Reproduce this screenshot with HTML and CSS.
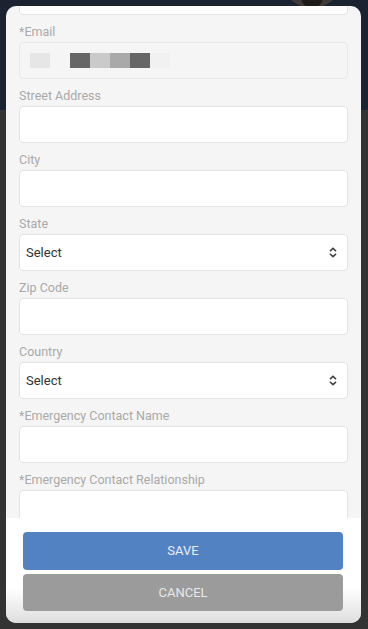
FILE: index.html
```html
<!DOCTYPE html>
<html lang="en">
<head>
    <meta charset="UTF-8">
    <meta name="viewport" content="width=device-width, initial-scale=1.0">
    <title>Edit Profile</title>
    <link rel="stylesheet" href="styles.css">
</head>
<body>
    <div class="page-header">
        <div class="avatar"><div class="avatar-head"></div></div>
    </div>

    <div class="modal">
        <div class="modal-body">
            <div class="field field-cut">
                <input class="input" type="text">
            </div>

            <div class="field">
                <label class="label">*Email</label>
                <div class="input input-disabled">
                    <div class="blur">
                        <span class="px px-1"></span>
                        <span class="px px-gap"></span>
                        <span class="px px-2"></span>
                        <span class="px px-3"></span>
                        <span class="px px-4"></span>
                        <span class="px px-2"></span>
                        <span class="px px-5"></span>
                    </div>
                </div>
            </div>

            <div class="field">
                <label class="label">Street Address</label>
                <input class="input" type="text">
            </div>

            <div class="field">
                <label class="label">City</label>
                <input class="input" type="text">
            </div>

            <div class="field">
                <label class="label">State</label>
                <div class="input select">
                    <span>Select</span>
                    <svg class="chevrons" width="8" height="11" viewBox="0 0 8 11">
                        <path d="M1 4.2 L4 1.4 L7 4.2 M1 6.8 L4 9.6 L7 6.8" fill="none" stroke="#444" stroke-width="1.6"/>
                    </svg>
                </div>
            </div>

            <div class="field">
                <label class="label">Zip Code</label>
                <input class="input" type="text">
            </div>

            <div class="field">
                <label class="label">Country</label>
                <div class="input select">
                    <span>Select</span>
                    <svg class="chevrons" width="8" height="11" viewBox="0 0 8 11">
                        <path d="M1 4.2 L4 1.4 L7 4.2 M1 6.8 L4 9.6 L7 6.8" fill="none" stroke="#444" stroke-width="1.6"/>
                    </svg>
                </div>
            </div>

            <div class="field">
                <label class="label">*Emergency Contact Name</label>
                <input class="input" type="text">
            </div>

            <div class="field">
                <label class="label">*Emergency Contact Relationship</label>
                <input class="input" type="text">
            </div>
        </div>

        <div class="modal-footer">
            <button class="btn btn-save">SAVE</button>
            <button class="btn btn-cancel">CANCEL</button>
        </div>
    </div>
</body>
</html>
```

FILE: styles.css
```css
* {
    margin: 0;
    padding: 0;
    box-sizing: border-box;
}

body {
    font-family: Roboto, 'Liberation Sans', Arial, sans-serif;
    background: #333333;
    height: 629px;
    overflow: hidden;
}

.page-header {
    position: relative;
    height: 110px;
    background: #1b2230;
}

.avatar {
    position: absolute;
    left: 280px;
    top: -56px;
    width: 64px;
    height: 64px;
    border-radius: 50%;
    background: #3f3b39;
}

.avatar-head {
    width: 22px;
    height: 22px;
    margin: 42px auto 0;
    border-radius: 50%;
    background: #1e1b1a;
}

.modal {
    position: fixed;
    top: 6px;
    left: 6px;
    width: 355px;
    height: 617px;
    background: #f5f5f5;
    border-radius: 10px;
    overflow: hidden;
    display: flex;
    flex-direction: column;
}

.modal-body {
    flex: 1;
    overflow: hidden;
    padding: 0 13px;
}

.field {
    margin-bottom: 10px;
}

.field-cut {
    margin-top: -28px;
}

.label {
    display: block;
    font-size: 12.5px;
    line-height: 14px;
    color: #a9a9a9;
    margin-bottom: 3px;
}

.input {
    display: block;
    width: 100%;
    height: 37px;
    background: #fff;
    border: 1.5px solid #e3e3e3;
    border-radius: 4px;
    outline: none;
}

.input-disabled {
    background: #f5f5f5;
    border-color: #e8e8e8;
    display: flex;
    align-items: center;
    padding-left: 10px;
}

.blur {
    display: flex;
    height: 15px;
}

.px {
    width: 20px;
    height: 15px;
}

.px-1 { background: #e6e6e6; }
.px-gap { background: transparent; }
.px-2 { background: #666666; }
.px-3 { background: #cacaca; }
.px-4 { background: #a9a9a9; }
.px-5 { background: #f1f1f1; }

.select {
    display: flex;
    align-items: center;
    justify-content: space-between;
    padding: 0 10px 0 6px;
    font-size: 13px;
    color: #333;
}

.chevrons {
    display: block;
}

.modal-footer {
    background: linear-gradient(#ffffff 0, #ffffff 70px, #dedede 105px);
    padding: 14px 18px 12px 17px;
    display: flex;
    flex-direction: column;
    gap: 4px;
}

.btn {
    height: 37.5px;
    border: none;
    border-radius: 4px;
    font-family: Roboto, 'Liberation Sans', Arial, sans-serif;
    font-size: 13px;
}

.btn-save {
    background: #5382c3;
    color: #e9eff8;
}

.btn-cancel {
    background: #9b9b9b;
    color: #e8e8e8;
}
```
